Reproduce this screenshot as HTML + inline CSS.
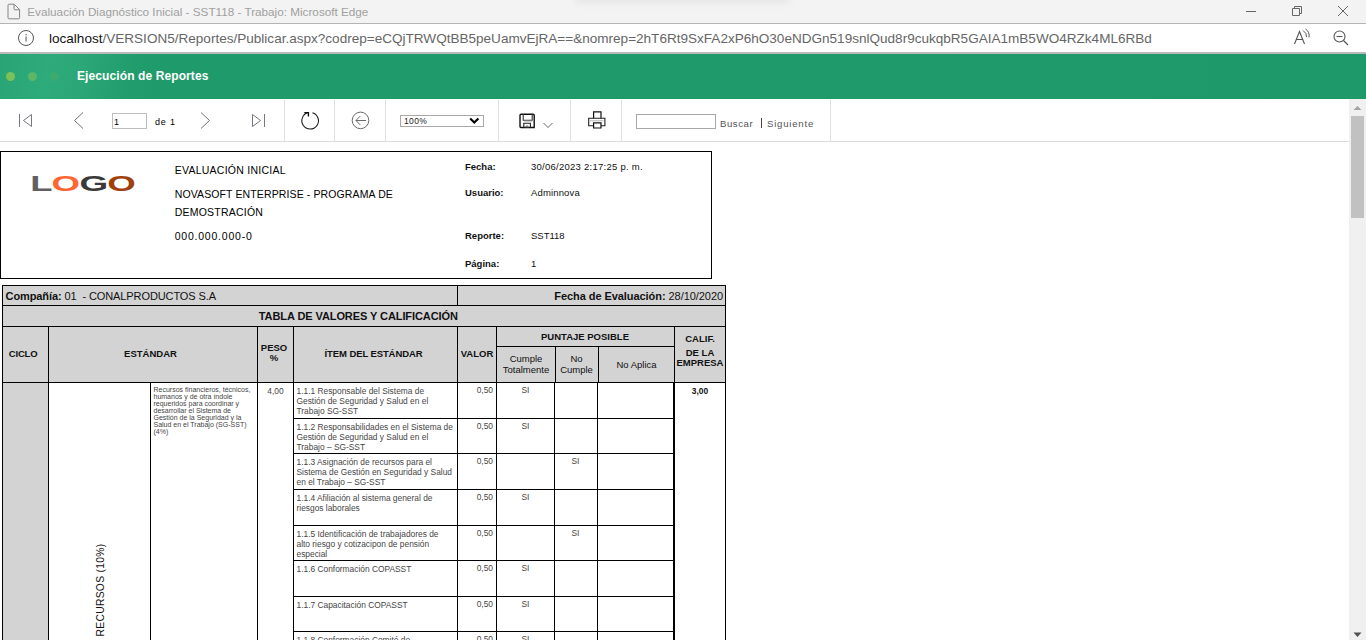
<!DOCTYPE html>
<html><head><meta charset="utf-8">
<style>
*{margin:0;padding:0;box-sizing:border-box}
html,body{width:1366px;height:640px;overflow:hidden;background:#fff;font-family:"Liberation Sans",sans-serif;position:relative}
.a{position:absolute}
.t{position:absolute;white-space:nowrap}
#titlebar{left:0;top:0;width:1366px;height:23px;background:#f3f3f3}
#tline{left:0;top:23px;width:1366px;height:1px;background:#b4b4b4}
#addr{left:0;top:24px;width:1366px;height:28px;background:#fff}
#aline{left:0;top:52px;width:1366px;height:2px;background:#bababa}
#green{left:0;top:54px;width:1366px;height:45px;background:linear-gradient(100deg,#29a575 0px,#2eab7b 50px,#2ba777 85px,#219c6c 135px,#1f9a6a 170px,#1e9969 100%)}
#toolbar{left:0;top:99px;width:1349px;height:42px;background:#fff}
#tbline{left:0;top:141px;width:1349px;height:1px;background:#dcdcdc}
.vsep{position:absolute;top:100px;width:1px;height:41px;background:#e0e0e0}
.hl{position:absolute;background:#000;height:1px}
.vl{position:absolute;background:#000;width:1px}
.gray{position:absolute;background:#d3d3d3}
.sm{font-size:9px;color:#333;line-height:10px}
</style></head><body>
<div class="a" id="titlebar"></div>
<div class="a" style="left:575px;top:-5px;width:215px;height:8px;border-radius:4px;background:#dcdcdc;filter:blur(3px);opacity:0.6"></div>
<div class="a" id="tline"></div>
<div class="a" id="addr"></div>
<div class="a" id="aline"></div>
<div class="a" id="green"></div>
<div class="a" id="toolbar"></div>
<div class="a" id="tbline"></div>

<div class="a" style="left:7px;top:3px;width:14px;height:17px">
<svg width="14" height="17" viewBox="0 0 14 17"><path d="M2 1.2 H7.2 L12.6 6.6 V14.8 A1 1 0 0 1 11.6 15.8 H2 A1 1 0 0 1 1 14.8 V2.2 A1 1 0 0 1 2 1.2 Z M7 1.5 V5.8 A1 1 0 0 0 8 6.8 H12.4" fill="none" stroke="#858585" stroke-width="1"/></svg></div>
<div class="t" id="ttl" style="left:27.3px;top:5.1px;font-size:11.72px;color:#a0a0a0;">Evaluación Diagnóstico Inicial - SST118 - Trabajo: Microsoft Edge</div>
<svg class="a" style="left:1240px;top:0" width="126" height="23" viewBox="0 0 126 23">
<path d="M6 11.5 H16" stroke="#666" stroke-width="1"/>
<path d="M52.5 8.5 h7 v7 h-7 z M54.5 8.5 v-2 h7 v7 h-2" fill="none" stroke="#666" stroke-width="1"/>
<path d="M98 6 L108 16 M108 6 L98 16" stroke="#666" stroke-width="1"/>
</svg>
<svg class="a" style="left:17px;top:29px" width="18" height="18" viewBox="0 0 18 18"><circle cx="9" cy="9" r="7.5" fill="none" stroke="#555" stroke-width="1"/><rect x="8.4" y="7.5" width="1.3" height="5" fill="#777"/><rect x="8.4" y="5" width="1.3" height="1.3" fill="#777"/></svg>
<div class="t" id="url" style="left:49px;top:30.8px;font-size:13.55px;color:#666;"><span style="color:#111">localhost</span>/VERSION5/Reportes/Publicar.aspx?codrep=eCQjTRWQtBB5peUamvEjRA==&amp;nomrep=2hT6Rt9SxFA2xP6hO30eNDGn519snlQud8r9cukqbR5GAIA1mB5WO4RZk4ML6RBd</div>
<svg class="a" style="left:1290px;top:28px" width="76" height="20" viewBox="0 0 76 20">
<path d="M4.5 16 L9.5 3.5 L14.5 16 M6.5 11.5 H12.5" fill="none" stroke="#555" stroke-width="1.1"/>
<path d="M13 2.5 Q17 5 16.5 9" fill="none" stroke="#555" stroke-width="1"/>
<path d="M15.5 1 Q20 4 19 9.5" fill="none" stroke="#555" stroke-width="1"/>
<circle cx="49.5" cy="8.5" r="5.5" fill="none" stroke="#555" stroke-width="1.1"/>
<path d="M46.5 8.5 H52.5" stroke="#555" stroke-width="1.1"/>
<path d="M53.5 12.5 L58 17" stroke="#555" stroke-width="1.2"/>
</svg>

<div class="a" style="left:5.5px;top:71.8px;width:9.2px;height:9.2px;border-radius:50%;background:#7cc05a"></div>
<div class="a" style="left:27.7px;top:71.8px;width:9.2px;height:9.2px;border-radius:50%;background:#5db567"></div>
<div class="a" style="left:49.7px;top:71.8px;width:9.2px;height:9.2px;border-radius:50%;background:#3daa70"></div>
<div class="t" id="hdr" style="left:77px;top:69px;letter-spacing:0.1px;font-size:12px;font-weight:bold;color:#fff">Ejecución de Reportes</div>
<div class="vsep" style="left:284px"></div>
<div class="vsep" style="left:334px"></div>
<div class="vsep" style="left:385px"></div>
<div class="vsep" style="left:498px"></div>
<div class="vsep" style="left:570px"></div>
<div class="vsep" style="left:621px"></div>
<div class="vsep" style="left:830px"></div>
<svg class="a" style="left:0;top:99px" width="840" height="42" viewBox="0 0 840 42">
<path d="M19.5 15 V28" stroke="#707078" stroke-width="0.95"/>
<path d="M31.5 15.5 L23.5 21.5 L31.5 27.5 Z" fill="none" stroke="#707078" stroke-width="0.95"/>
<path d="M83 13.5 L74.5 21.5 L83 29.5" fill="none" stroke="#707078" stroke-width="1"/>
<path d="M201 13.5 L209.5 21.5 L201 29.5" fill="none" stroke="#707078" stroke-width="1"/>
<path d="M252.5 15.5 L260.5 21.5 L252.5 27.5 Z" fill="none" stroke="#707078" stroke-width="0.95"/>
<path d="M264.5 15 V28" stroke="#707078" stroke-width="0.95"/>
<path d="M312.4 13.7 A8.3 8.3 0 1 1 308.3 13.6" fill="none" stroke="#1a1a1a" stroke-width="1.05"/>
<path d="M304.3 13.6 H308.4 V17.4" fill="none" stroke="#111" stroke-width="1.4"/>
<circle cx="360.5" cy="21.4" r="8.3" fill="none" stroke="#6a6a6a" stroke-width="1"/>
<path d="M356 21.5 H366 M360.2 17.1 L356 21.5 L360.2 25.9" fill="none" stroke="#6a6a6a" stroke-width="1"/>
<path d="M521 15.2 h12.2 a1 1 0 0 1 1 1 v12.3 h-13.2 a1 1 0 0 1 -1 -1 v-11.3 a1 1 0 0 1 1 -1 z" fill="none" stroke="#111" stroke-width="1.4"/>
<path d="M523.2 15 v6.3 h9 v-6.3" fill="none" stroke="#333" stroke-width="1.1"/>
<path d="M523.8 22 h8" stroke="#888" stroke-width="0.8"/>
<path d="M523.8 29 v-4.8 h6.6 v4.8" fill="none" stroke="#222" stroke-width="1.1"/>
<path d="M526 29 v-2 h2 v2" fill="none" stroke="#555" stroke-width="0.8"/>
<path d="M543.5 24 L548 28.5 L552.5 24" fill="none" stroke="#666" stroke-width="1"/>
<path d="M593.6 19.5 v-6.6 h7.4 v6.6" fill="none" stroke="#111" stroke-width="1.2"/>
<path d="M593 26.8 h-4.3 v-7.6 h16.2 v7.6 h-4" fill="none" stroke="#222" stroke-width="1.1"/>
<path d="M593.6 23.8 h7.4 v5.2 h-7.4 z" fill="none" stroke="#111" stroke-width="1.2"/>
<path d="M590 21.8 H603.5" stroke="#aaa" stroke-width="0.9"/>
</svg>
<div class="a" style="left:112px;top:113px;width:35px;height:16px;border:1px solid #bdbdbd;background:#fff"></div>
<div class="t" id="pg1" style="left:114px;top:116.5px;font-size:9px;color:#000">1</div>
<div class="t" id="de1" style="left:155px;top:116.5px;font-size:9px;letter-spacing:0.8px;color:#000">de 1</div>
<div class="a" style="left:400px;top:115px;width:84px;height:12px;border:1px solid #a8a8a8;background:#fff"></div>
<div class="t" id="pct" style="left:404px;top:116px;font-size:8.5px;letter-spacing:0.35px;color:#222">100%</div>
<svg class="a" style="left:469px;top:117px" width="11" height="8" viewBox="0 0 11 8"><path d="M1.2 1.5 L5.3 5.6 L9.4 1.5" fill="none" stroke="#000" stroke-width="2.1"/></svg>
<div class="a" style="left:636px;top:114px;width:80px;height:15px;border:1px solid #a8a8a8;background:#fff"></div>
<div class="t" id="bus" style="left:720px;top:118.3px;font-size:9.6px;letter-spacing:0.55px;color:#555">Buscar</div>
<div class="a" style="left:761px;top:118px;width:1px;height:10px;background:#5a3a3a"></div>
<div class="t" id="sig" style="left:767px;top:118.3px;font-size:9.6px;letter-spacing:0.78px;color:#555">Siguiente</div>

<div class="a" style="left:1349px;top:99px;width:17px;height:541px;background:#f0f0f0"></div>
<div class="a" style="left:1351px;top:116px;width:13px;height:102px;background:#c1c1c1"></div>
<svg class="a" style="left:1349px;top:99px" width="17" height="541" viewBox="0 0 17 541">
<path d="M4.5 11 L8.5 7 L12.5 11 Z" fill="#a3a3a3"/>
<path d="M4.5 533.5 L8.5 538 L12.5 533.5 Z" fill="#505050"/>
</svg>
<!--REPORT--><div class="a" style="left:0px;top:151px;width:712px;height:1px;background:#000"></div>
<div class="a" style="left:0px;top:278px;width:712px;height:1px;background:#000"></div>
<div class="a" style="left:0px;top:151px;width:1px;height:128px;background:#000"></div>
<div class="a" style="left:711px;top:151px;width:1px;height:128px;background:#000"></div>
<svg class="a" style="left:28px;top:168px" width="112" height="26" viewBox="0 0 112 26">
<g font-family="Liberation Sans" font-weight="bold" font-size="22.5">
<text x="0" y="22.6" fill="#606060" transform="translate(2.2,0) scale(1.62,1)">L</text>
<text x="0" y="22.6" fill="#ff6633" transform="translate(23.5,0) scale(1.63,1)">O</text>
<text x="0" y="22.6" fill="#3a3a3a" transform="translate(51.5,0) scale(1.64,1)">G</text>
<text x="0" y="22.6" fill="#a0400c" transform="translate(79.3,0) scale(1.63,1)">O</text>
</g></svg>
<div class="t" id="h1" style="left:174.7px;top:164px;font-size:10.5px;color:#000;letter-spacing:0.25px;">EVALUACIÓN INICIAL</div>
<div class="t" id="h2" style="left:174.7px;top:188px;font-size:10.5px;color:#000;letter-spacing:0.12px;">NOVASOFT ENTERPRISE - PROGRAMA DE</div>
<div class="t" id="h3" style="left:174.7px;top:205.7px;font-size:10.5px;color:#000;letter-spacing:0.22px;">DEMOSTRACIÓN</div>
<div class="t" id="h4" style="left:174.7px;top:230px;font-size:10.5px;color:#000;letter-spacing:0.78px;">000.000.000-0</div>
<div class="t" id="f1" style="left:465px;top:160.7px;font-size:9.5px;color:#111;font-weight:bold;">Fecha:</div>
<div class="t" id="f1v" style="left:531px;top:160.7px;font-size:9.5px;color:#111;letter-spacing:0.26px;">30/06/2023 2:17:25 p. m.</div>
<div class="t" id="f2" style="left:465px;top:187.3px;font-size:9.5px;color:#111;font-weight:bold;">Usuario:</div>
<div class="t" id="f2v" style="left:531px;top:187.3px;font-size:9.5px;color:#111;letter-spacing:0.15px;">Adminnova</div>
<div class="t" id="f3" style="left:465px;top:230.4px;font-size:9.5px;color:#111;font-weight:bold;">Reporte:</div>
<div class="t" id="f3v" style="left:531px;top:230.4px;font-size:9.5px;color:#111;">SST118</div>
<div class="t" id="f4" style="left:465px;top:258px;font-size:9.5px;color:#111;font-weight:bold;">Página:</div>
<div class="t" id="f4v" style="left:531px;top:258px;font-size:9.5px;color:#111;">1</div>
<div class="a" style="left:2px;top:285px;width:724px;height:97px;background:#d3d3d3"></div>
<div class="a" style="left:2px;top:382px;width:46px;height:258px;background:#d3d3d3"></div>
<div class="a" style="left:2px;top:285px;width:724px;height:1px;background:#000"></div>
<div class="a" style="left:2px;top:285px;width:1px;height:355px;background:#000"></div>
<div class="a" style="left:725px;top:285px;width:1px;height:355px;background:#000"></div>
<div class="a" style="left:2px;top:305px;width:724px;height:1px;background:#000"></div>
<div class="a" style="left:457px;top:285px;width:1px;height:20px;background:#000"></div>
<div class="a" style="left:2px;top:326px;width:724px;height:1px;background:#000"></div>
<div class="a" style="left:2px;top:382px;width:724px;height:1px;background:#000"></div>
<div class="a" style="left:48px;top:326px;width:1px;height:56px;background:#000"></div>
<div class="a" style="left:257px;top:326px;width:1px;height:56px;background:#000"></div>
<div class="a" style="left:293px;top:326px;width:1px;height:56px;background:#000"></div>
<div class="a" style="left:457px;top:326px;width:1px;height:56px;background:#000"></div>
<div class="a" style="left:496px;top:326px;width:1px;height:56px;background:#000"></div>
<div class="a" style="left:674px;top:326px;width:1px;height:56px;background:#000"></div>
<div class="a" style="left:496px;top:346px;width:178px;height:1px;background:#000"></div>
<div class="a" style="left:555px;top:346px;width:1px;height:36px;background:#000"></div>
<div class="a" style="left:598px;top:346px;width:1px;height:36px;background:#000"></div>
<div class="a" style="left:48px;top:382px;width:1px;height:258px;background:#000"></div>
<div class="a" style="left:150px;top:382px;width:1px;height:258px;background:#000"></div>
<div class="a" style="left:257px;top:382px;width:1px;height:258px;background:#000"></div>
<div class="a" style="left:293px;top:382px;width:1px;height:258px;background:#000"></div>
<div class="a" style="left:457px;top:382px;width:1px;height:258px;background:#000"></div>
<div class="a" style="left:496px;top:382px;width:1px;height:258px;background:#000"></div>
<div class="a" style="left:554px;top:382px;width:1px;height:258px;background:#000"></div>
<div class="a" style="left:597px;top:382px;width:1px;height:258px;background:#000"></div>
<div class="a" style="left:673px;top:382px;width:2px;height:258px;background:#000"></div>
<div class="a" style="left:293px;top:418px;width:380px;height:1px;background:#000"></div>
<div class="a" style="left:293px;top:453px;width:380px;height:1px;background:#000"></div>
<div class="a" style="left:293px;top:489px;width:380px;height:1px;background:#000"></div>
<div class="a" style="left:293px;top:525px;width:380px;height:1px;background:#000"></div>
<div class="a" style="left:293px;top:560px;width:380px;height:1px;background:#000"></div>
<div class="a" style="left:293px;top:596px;width:380px;height:1px;background:#000"></div>
<div class="a" style="left:293px;top:631px;width:380px;height:1px;background:#000"></div>
<div class="t" id="comp" style="left:5.6px;top:290px;font-size:11px;letter-spacing:-0.1px;color:#111;"><b>Compañía:</b> 01&nbsp; - CONALPRODUCTOS S.A</div>
<div class="t" id="fev" style="left:423px;top:290px;width:300px;text-align:right;font-size:11px;letter-spacing:-0.06px;color:#111;"><b>Fecha de Evaluación:</b> 28/10/2020</div>
<div class="t" id="tab" style="left:258.8px;top:310px;font-size:11px;letter-spacing:-0.085px;font-weight:bold;color:#111;">TABLA DE VALORES Y CALIFICACIÓN</div>
<div class="t" id="cic" style="left:8.7px;top:348px;font-size:9.5px;font-weight:bold;color:#111;letter-spacing:-0.15px;">CICLO</div>
<div class="t" id="est" style="left:50.5px;top:348px;width:200px;text-align:center;font-size:9.5px;font-weight:bold;color:#111;">ESTÁNDAR</div>
<div class="t" id="peso" style="left:254.0px;top:342.7px;width:40px;text-align:center;font-size:9.5px;font-weight:bold;color:#111;line-height:10.5px;">PESO<br>%</div>
<div class="t" id="item" style="left:273.5px;top:347.7px;width:200px;text-align:center;font-size:9.5px;font-weight:bold;color:#111;letter-spacing:-0.1px;">ÍTEM DEL ESTÁNDAR</div>
<div class="t" id="valor" style="left:457.0px;top:348px;width:40px;text-align:center;font-size:9.5px;font-weight:bold;color:#111;">VALOR</div>
<div class="t" id="punt" style="left:485.0px;top:331px;width:200px;text-align:center;font-size:9.5px;font-weight:bold;color:#111;">PUNTAJE POSIBLE</div>
<div class="t" id="cum" style="left:496.0px;top:352.5px;width:60px;text-align:center;font-size:9.5px;color:#111;line-height:11px;">Cumple<br>Totalmente</div>
<div class="t" id="noc" style="left:551.5px;top:352.5px;width:50px;text-align:center;font-size:9.5px;color:#111;line-height:11px;">No<br>Cumple</div>
<div class="t" id="noa" style="left:596.5px;top:358.7px;width:80px;text-align:center;font-size:9.5px;color:#111;line-height:11px;">No Aplica</div>
<div class="t" id="cal" style="left:670.0px;top:333px;width:60px;text-align:center;font-size:9.5px;font-weight:bold;color:#111;">CALIF.</div>
<div class="t" id="emp" style="left:670.0px;top:347.5px;width:60px;text-align:center;font-size:9.5px;font-weight:bold;color:#111;line-height:10px;">DE LA<br>EMPRESA</div>
<div class="t" id="r0" style="left:296.5px;top:385.6px;font-size:8.4px;color:#464646;line-height:10px;">1.1.1 Responsable del Sistema de<br>Gestión de Seguridad y Salud en el<br>Trabajo SG-SST</div>
<div class="t" style="left:463px;top:385.2px;width:30px;text-align:right;font-size:8.4px;color:#464646;line-height:10px;">0,50</div>
<div class="t" style="left:505.5px;top:385.2px;width:40px;text-align:center;font-size:8.4px;color:#464646;line-height:10px;">SI</div>
<div class="t" id="r1" style="left:296.5px;top:421.6px;font-size:8.4px;color:#464646;line-height:10px;">1.1.2 Responsabilidades en el Sistema de<br>Gestión de Seguridad y Salud en el<br>Trabajo – SG-SST</div>
<div class="t" style="left:463px;top:421.2px;width:30px;text-align:right;font-size:8.4px;color:#464646;line-height:10px;">0,50</div>
<div class="t" style="left:505.5px;top:421.2px;width:40px;text-align:center;font-size:8.4px;color:#464646;line-height:10px;">SI</div>
<div class="t" id="r2" style="left:296.5px;top:456.6px;font-size:8.4px;color:#464646;line-height:10px;">1.1.3 Asignación de recursos para el<br>Sistema de Gestión en Seguridad y Salud<br>en el Trabajo – SG-SST</div>
<div class="t" style="left:463px;top:456.2px;width:30px;text-align:right;font-size:8.4px;color:#464646;line-height:10px;">0,50</div>
<div class="t" style="left:555.5px;top:456.2px;width:40px;text-align:center;font-size:8.4px;color:#464646;line-height:10px;">SI</div>
<div class="t" id="r3" style="left:296.5px;top:492.6px;font-size:8.4px;color:#464646;line-height:10px;">1.1.4 Afiliación al sistema general de<br>riesgos laborales</div>
<div class="t" style="left:463px;top:492.2px;width:30px;text-align:right;font-size:8.4px;color:#464646;line-height:10px;">0,50</div>
<div class="t" style="left:505.5px;top:492.2px;width:40px;text-align:center;font-size:8.4px;color:#464646;line-height:10px;">SI</div>
<div class="t" id="r4" style="left:296.5px;top:528.6px;font-size:8.4px;color:#464646;line-height:10px;">1.1.5 Identificación de trabajadores de<br>alto riesgo y cotizacipon de pensión<br>especial</div>
<div class="t" style="left:463px;top:528.2px;width:30px;text-align:right;font-size:8.4px;color:#464646;line-height:10px;">0,50</div>
<div class="t" style="left:555.5px;top:528.2px;width:40px;text-align:center;font-size:8.4px;color:#464646;line-height:10px;">SI</div>
<div class="t" id="r5" style="left:296.5px;top:563.6px;font-size:8.4px;color:#464646;line-height:10px;">1.1.6 Conformación COPASST</div>
<div class="t" style="left:463px;top:563.2px;width:30px;text-align:right;font-size:8.4px;color:#464646;line-height:10px;">0,50</div>
<div class="t" style="left:505.5px;top:563.2px;width:40px;text-align:center;font-size:8.4px;color:#464646;line-height:10px;">SI</div>
<div class="t" id="r6" style="left:296.5px;top:599.6px;font-size:8.4px;color:#464646;line-height:10px;">1.1.7 Capacitación COPASST</div>
<div class="t" style="left:463px;top:599.2px;width:30px;text-align:right;font-size:8.4px;color:#464646;line-height:10px;">0,50</div>
<div class="t" style="left:505.5px;top:599.2px;width:40px;text-align:center;font-size:8.4px;color:#464646;line-height:10px;">SI</div>
<div class="t" id="r7" style="left:296.5px;top:634.6px;font-size:8.4px;color:#464646;line-height:10px;">1.1.8 Conformación Comité de</div>
<div class="t" style="left:463px;top:634.2px;width:30px;text-align:right;font-size:8.4px;color:#464646;line-height:10px;">0,50</div>
<div class="t" style="left:505.5px;top:634.2px;width:40px;text-align:center;font-size:8.4px;color:#464646;line-height:10px;">SI</div>
<div class="t" id="desc" style="left:153.5px;top:387px;font-size:7px;color:#444;line-height:6.96px;">Recursos financieros, técnicos,<br>humanos y de otra índole<br>requeridos para coordinar y<br>desarrollar el Sistema de<br>Gestión de la Seguridad y la<br>Salud en el Trabajo (SG-SST)<br>(4%)</div>
<div class="t" id="p400" style="left:260.5px;top:386px;width:30px;text-align:center;font-size:8.4px;color:#464646;line-height:10px;">4,00</div>
<div class="t" id="c300" style="left:680.0px;top:386px;width:40px;text-align:center;font-size:8.4px;color:#464646;line-height:10px;font-weight:bold;color:#111;">3,00</div>
<div class="t" id="recv" style="left:100px;top:589.8px;font-size:10.3px;letter-spacing:0.3px;color:#111;transform:translate(-50%,-50%) rotate(-90deg);transform-origin:center center">RECURSOS (10%)</div><!--/REPORT-->
</body></html>
